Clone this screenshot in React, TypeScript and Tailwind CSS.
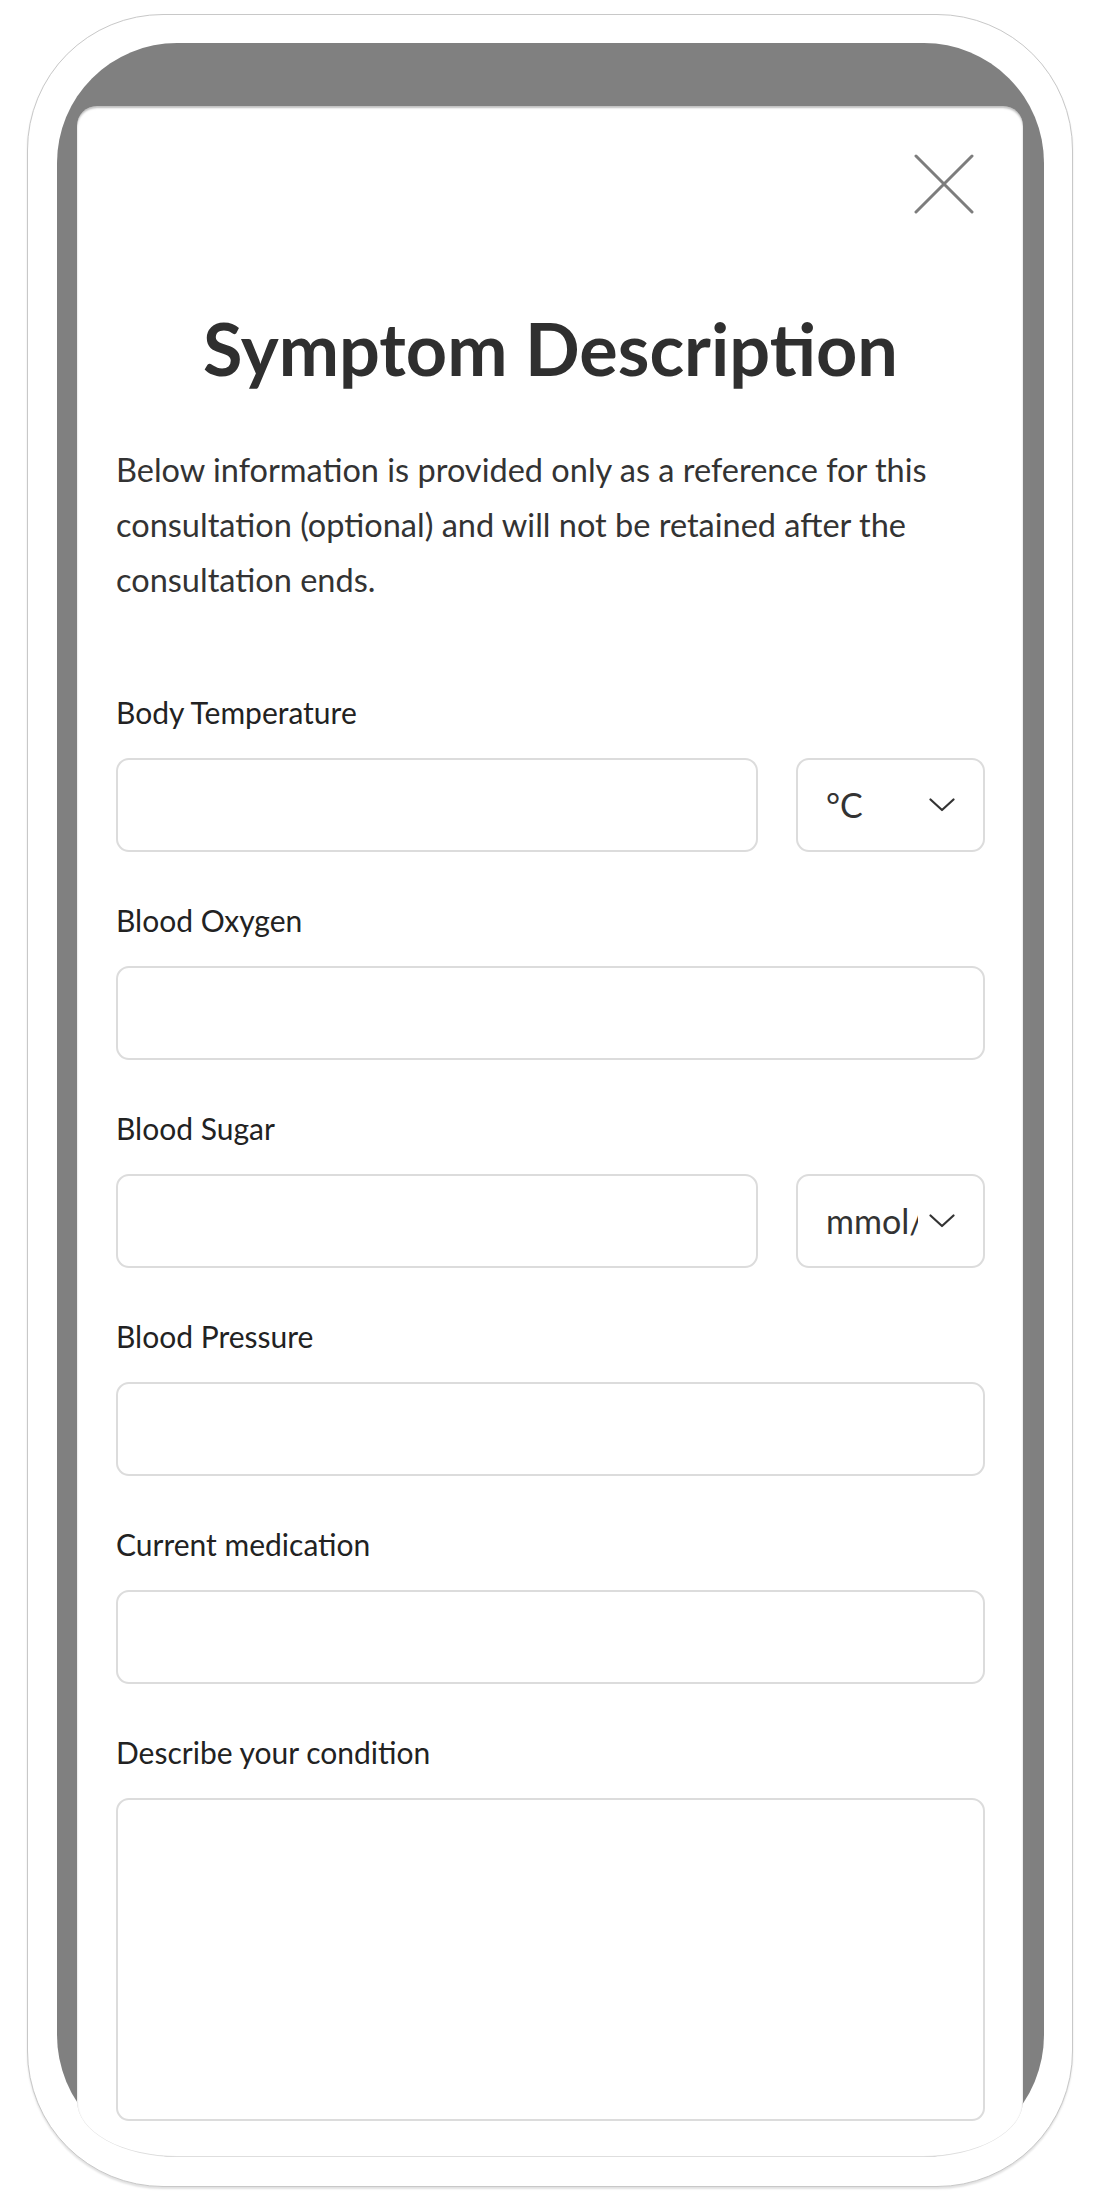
import { ReactNode } from "react";

function Chevron() {
  return (
    <svg width="26" height="14" viewBox="0 0 26 14" fill="none" className="shrink-0">
      <path d="M1.5 1.5 L13 12 L24.5 1.5" stroke="#333" strokeWidth="2.2" strokeLinecap="round" strokeLinejoin="round" />
    </svg>
  );
}

function Field({ label, children }: { label: string; children: ReactNode }) {
  return (
    <div className="mb-[48px]">
      <div className="mb-[26px] h-[40px] text-[30px] leading-[40px] text-[#222]">{label}</div>
      {children}
    </div>
  );
}

function TextBox() {
  return <div className="h-[94px] flex-1 rounded-[13px] border-2 border-[#dcdcdc] bg-white" />;
}

function UnitSelect({ value }: { value: string }) {
  return (
    <div className="flex h-[94px] w-[189px] items-center rounded-[13px] border-2 border-[#dcdcdc] bg-white pl-[28px] pr-[28px]">
      <div className="w-[92px] overflow-hidden whitespace-nowrap text-[34px] leading-[40px] text-[#333]">{value}</div>
      <div className="ml-auto">
        <Chevron />
      </div>
    </div>
  );
}

export default function App() {
  return (
    <div className="min-h-screen bg-white font-[Lato,sans-serif]">
      <div className="ml-[27px] pt-[14px]">
        <div className="h-[2173px] w-[1046px] rounded-[136px] border border-[#c8c8c8] bg-white pl-[29px] pt-[28px] shadow-[0_2px_2px_rgba(0,0,0,0.12)]">
          <div className="h-[2114px] w-[987px] rounded-t-[120px] rounded-b-[122px] bg-[#808080] pl-[20px] pt-[63px]">
            <div className="h-[2051px] w-[946px] overflow-hidden rounded-t-[20px] rounded-b-[100px_56px] border-b border-[#dedede] bg-white pl-[39px] pr-[38px] pt-[48px] shadow-[inset_0_2px_2px_rgba(0,0,0,0.25)]">
              <div className="mr-[11px] flex justify-end">
                <svg width="60" height="60" viewBox="0 0 60 60" fill="none">
                  <path d="M2 2 L58 58 M58 2 L2 58" stroke="#7d7d7d" strokeWidth="3" strokeLinecap="round" />
                </svg>
              </div>

              <h1 className="mt-[92px] text-center text-[72px] font-bold leading-[84px] text-[#2f2f2f]">
                Symptom Description
              </h1>

              <p className="mt-[52px] text-[32.5px] leading-[55px] text-[#333]">
                Below information is provided only as a reference for this consultation (optional) and will not be retained after the consultation ends.
              </p>

              <div className="mt-[85px]">
                <Field label="Body Temperature">
                  <div className="flex gap-[38px]">
                    <TextBox />
                    <UnitSelect value="°C" />
                  </div>
                </Field>
                <Field label="Blood Oxygen">
                  <div className="flex">
                    <TextBox />
                  </div>
                </Field>
                <Field label="Blood Sugar">
                  <div className="flex gap-[38px]">
                    <TextBox />
                    <UnitSelect value="mmol/L" />
                  </div>
                </Field>
                <Field label="Blood Pressure">
                  <div className="flex">
                    <TextBox />
                  </div>
                </Field>
                <Field label="Current medication">
                  <div className="flex">
                    <TextBox />
                  </div>
                </Field>
                <Field label="Describe your condition">
                  <div className="h-[323px] rounded-[13px] border-2 border-[#dcdcdc] bg-white" />
                </Field>
              </div>
            </div>
          </div>
        </div>
      </div>
    </div>
  );
}
